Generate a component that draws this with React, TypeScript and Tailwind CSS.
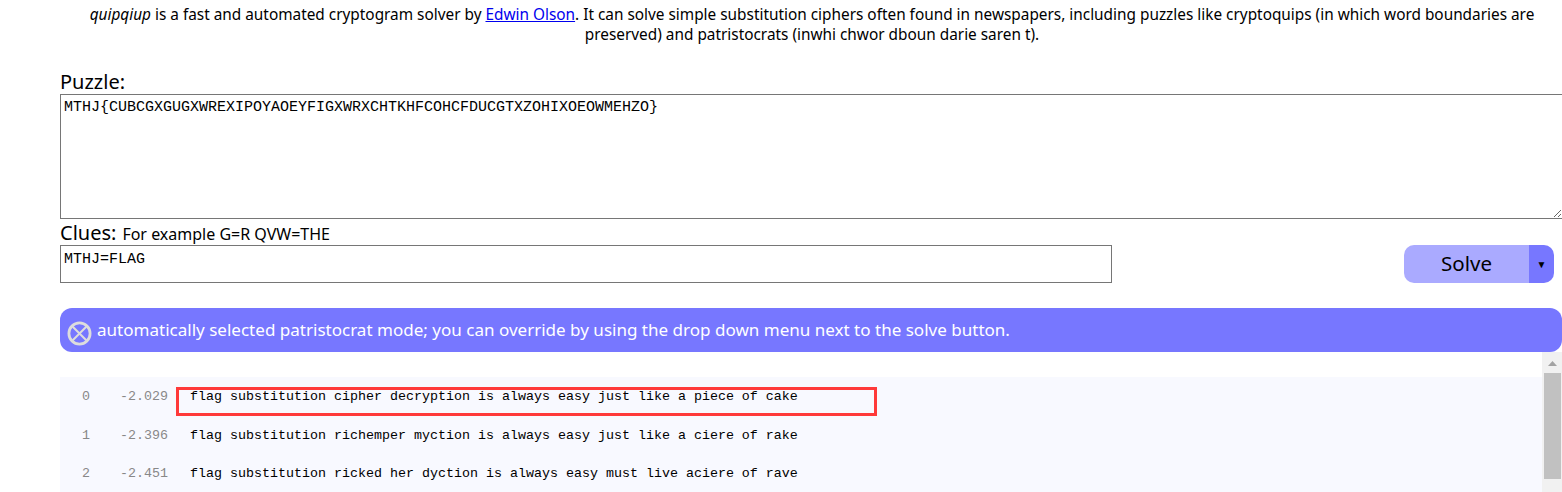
const sans = "font-['Noto_Sans','Open_Sans',sans-serif]";
const rows = [
  ["0", "-2.029", "flag substitution cipher decryption is always easy just like a piece of cake"],
  ["1", "-2.396", "flag substitution richemper myction is always easy just like a ciere of rake"],
  ["2", "-2.451", "flag substitution ricked her dyction is always easy must live aciere of rave"],
];

export default function App() {
  return (
    <div className={`relative h-[492px] w-full overflow-hidden bg-white text-black ${sans}`}>
      <p className="ml-[62px] w-[1500px] pt-[5px] text-center text-[15.36px] leading-[20px]">
        <em>quipqiup</em> is a fast and automated cryptogram solver by{" "}
        <a href="#" className="text-[#0000ee] underline">Edwin Olson</a>. It can solve simple substitution ciphers often found in newspapers, including puzzles like cryptoquips (in which word boundaries are preserved) and patristocrats (inwhi chwor dboun darie saren t).
      </p>
      <div className="ml-[60px] mt-[24px]">
        <div className="h-[25px] text-[20px] leading-[25px]">Puzzle:</div>
        <textarea
          readOnly
          defaultValue="MTHJ{CUBCGXGUGXWREXIPOYAOEYFIGXWRXCHTKHFCOHCFDUCGTXZOHIXOEOWMEHZO}"
          className="block h-[125px] w-[1503px] border border-[#767676] px-[3px] py-[4px] font-['Liberation_Mono',monospace] text-[15px] leading-[17px] outline-none"
        />
        <div className="mt-[1px] flex h-[25px] items-baseline gap-[6px] leading-[25px]">
          <span className="text-[20px]">Clues:</span>
          <span className="text-[16px]">For example G=R QVW=THE</span>
        </div>
        <div className="flex h-[38px] items-start">
          <input
            readOnly
            defaultValue="MTHJ=FLAG"
            className="h-[38px] w-[1052px] border border-[#767676] px-[3px] pb-[10px] font-['Liberation_Mono',monospace] text-[15px] outline-none"
          />
          <div className="ml-[292px] flex h-[38px] w-[150px] overflow-hidden rounded-[10px]">
            <div className="flex w-[125px] items-center justify-center bg-[#aaaaff] pb-[2px] text-[20.5px]">Solve</div>
            <div className="flex w-[25px] items-center justify-center bg-[#7777ff] text-[10px]">▼</div>
          </div>
        </div>
        <div className="mt-[25px] flex h-[44px] items-center rounded-[12px] bg-[#7777ff] pl-[7px] text-[17.04px] text-white">
          <svg width="25" height="25" viewBox="0 0 25 25" className="mr-[5px] mt-[6px] shrink-0" fill="none" stroke="#dddddd" strokeWidth="2.8">
            <circle cx="12.5" cy="12.5" r="10.6" />
            <path d="M5 5 L20 20 M20 5 L5 20" strokeWidth="2" />
          </svg>
          automatically selected patristocrat mode; you can override by using the drop down menu next to the solve button.
        </div>
        <div className="flex h-[140px]">
          <div className="min-w-0 flex-1 pt-[25px]">
            <div className="h-[115px] bg-[#f8f9ff] pt-[1px] font-['Liberation_Mono',monospace] text-[13.33px]">
              {rows.map((r) => (
                <div key={r[0]} className="flex h-[38.5px] items-center">
                  <span className="w-[30px] text-right text-[#888888]">{r[0]}</span>
                  <span className="w-[78px] text-right text-[#888888]">{r[1]}</span>
                  <span className="ml-[22px] whitespace-pre">{r[2]}</span>
                </div>
              ))}
            </div>
          </div>
          <div className="flex w-[20px] flex-col items-start bg-[#f1f1f1] pl-[2px]">
            <div className="flex h-[21px] w-[17px] items-center justify-center pt-[1px]">
              <svg width="9" height="5" viewBox="0 0 9 5"><path d="M4.5 0 L9 5 H0 Z" fill="#a3a3a3" /></svg>
            </div>
            <div className="h-[106px] w-[17px] bg-[#c1c1c1]" />
          </div>
        </div>
      </div>
      <div className="absolute left-[176px] top-[387px] h-[29px] w-[701px] border-[3px] border-[#ff3a3a]" />
    </div>
  );
}
